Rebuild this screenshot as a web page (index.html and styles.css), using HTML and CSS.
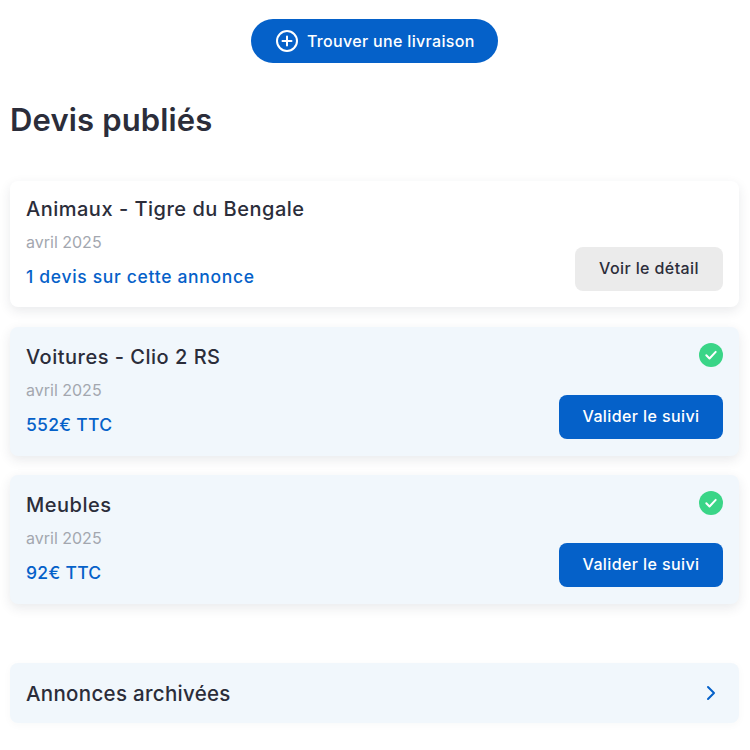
FILE: index.html
```html
<!DOCTYPE html>
<html lang="fr">
<head>
<meta charset="utf-8">
<title>Devis publiés</title>
<link rel="stylesheet" href="styles.css">
</head>
<body>
<main class="page">
  <div class="top">
    <a class="find-btn">
      <svg class="plus-icon" width="24" height="24" viewBox="0 0 24 24" fill="none" stroke="#fff" stroke-width="2" stroke-linecap="round"><circle cx="12" cy="12" r="10"/><path d="M12 7.5v9M7.5 12h9"/></svg>
      <span>Trouver une livraison</span>
    </a>
  </div>
  <h1 class="heading">Devis publiés</h1>
  <section class="list">
    <article class="card">
      <div class="info">
        <h2 class="name">Animaux - Tigre du Bengale</h2>
        <div class="date">avril 2025</div>
        <div class="price price-count">1 devis sur cette annonce</div>
      </div>
      <div class="side"><a class="btn btn-grey">Voir le détail</a></div>
    </article>
    <article class="card card-blue">
      <div class="info">
        <h2 class="name">Voitures - Clio 2 RS</h2>
        <div class="date">avril 2025</div>
        <div class="price">552€ TTC</div>
      </div>
      <div class="side">
        <svg class="check" width="24" height="24" viewBox="0 0 24 24"><circle cx="12" cy="12" r="12" fill="#3ad587"/><path d="M7.3 12.3l3.2 3.2 6.2-6.6" fill="none" stroke="#fff" stroke-width="2" stroke-linecap="round" stroke-linejoin="round"/></svg>
        <a class="btn btn-blue">Valider le suivi</a>
      </div>
    </article>
    <article class="card card-blue">
      <div class="info">
        <h2 class="name">Meubles</h2>
        <div class="date">avril 2025</div>
        <div class="price">92€ TTC</div>
      </div>
      <div class="side">
        <svg class="check" width="24" height="24" viewBox="0 0 24 24"><circle cx="12" cy="12" r="12" fill="#3ad587"/><path d="M7.3 12.3l3.2 3.2 6.2-6.6" fill="none" stroke="#fff" stroke-width="2" stroke-linecap="round" stroke-linejoin="round"/></svg>
        <a class="btn btn-blue">Valider le suivi</a>
      </div>
    </article>
  </section>
  <section class="archive">
    <span class="archive-label">Annonces archivées</span>
    <svg width="12" height="16" viewBox="0 0 12 16" fill="none" stroke="#0561c9" stroke-width="2" stroke-linecap="round" stroke-linejoin="round"><path d="M3 2l6 6-6 6"/></svg>
  </section>
</main>
</body>
</html>
```
FILE: styles.css
```css
* { box-sizing: border-box; }
html, body { margin: 0; padding: 0; background: #fff; }
body { font-family: "Inter", "Open Sans", sans-serif; color: #2b2d3a; }
.page { width: 750px; height: 750px; padding: 19px 11px 0 10px; overflow: hidden; }
.top { display: flex; justify-content: center; }
.find-btn { display: flex; align-items: center; gap: 8px; width: 247px; height: 44px; padding-left: 24px; border-radius: 22px; background: #0561c9; color: #fff; font-size: 16px; font-weight: 500; letter-spacing: 0.33px; }
.heading { margin: 38px 0 0; height: 38px; line-height: 38px; font-size: 31px; font-weight: 600; letter-spacing: 0.15px; }
.list { display: flex; flex-direction: column; gap: 20px; margin-top: 42px; }
.card { display: flex; justify-content: space-between; height: 126px; padding: 16px; border-radius: 8px; background: #fff; box-shadow: 0 4px 12px rgba(40, 50, 70, 0.1); }
.card-blue { height: 129px; padding-top: 18px; background: #f1f7fc; }
.card-blue + .card-blue { margin-top: -1px; }
.name { margin: 0; height: 24px; line-height: 24px; font-size: 20px; font-weight: 500; letter-spacing: 0.5px; }
.date { margin-top: 9px; height: 24px; line-height: 24px; font-size: 16px; color: #a3a7af; }
.price { margin-top: 11px; height: 24px; line-height: 24px; font-size: 17.5px; font-weight: 500; letter-spacing: 0.3px; color: #0561c9; }
.price-count { letter-spacing: 0.68px; }
.side { display: flex; flex-direction: column; justify-content: flex-end; align-items: flex-end; }
.card-blue .side { justify-content: space-between; margin-top: -2px; padding-bottom: 1px; }
.btn { display: flex; align-items: center; justify-content: center; height: 44px; padding-bottom: 2px; border-radius: 8px; font-size: 16px; font-weight: 500; letter-spacing: 0.4px; }
.btn-grey { width: 148px; background: #ebebeb; color: #2b2d3a; }
.btn-blue { width: 164px; background: #0561c9; color: #fff; }
.archive { display: flex; align-items: center; justify-content: space-between; height: 60px; margin-top: 59px; padding: 0 22px 0 16px; border-radius: 8px; background: #f1f7fc; box-shadow: 0 2px 8px rgba(40, 50, 70, 0.03); }
.archive-label { font-size: 20.5px; font-weight: 500; letter-spacing: 0.3px; }
```
